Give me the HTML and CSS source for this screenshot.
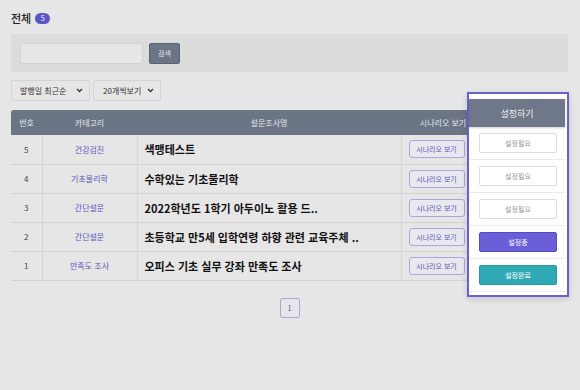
FILE: index.html
```html
<!DOCTYPE html>
<html lang="ko">
<head>
    <meta charset="UTF-8">
    <meta name="viewport" content="width=device-width, initial-scale=1.0">
    <title>설문조사 목록</title>
    <link rel="stylesheet" href="styles.css">
</head>
<body>
    <div class="page-head">
        <h2>전체</h2>
        <span class="count-badge">5</span>
    </div>

    <div class="search-box">
        <div class="search-input"></div>
        <button class="search-btn">검색</button>
    </div>

    <div class="filters">
        <div class="select sort">
            <span>발행일 최근순</span>
            <svg width="7" height="5" viewBox="0 0 7 5"><path d="M1 1l2.5 2.5L6 1" fill="none" stroke="#333" stroke-width="1.3"/></svg>
        </div>
        <div class="select per-page">
            <span>20개씩보기</span>
            <svg width="7" height="5" viewBox="0 0 7 5"><path d="M1 1l2.5 2.5L6 1" fill="none" stroke="#333" stroke-width="1.3"/></svg>
        </div>
    </div>

    <table class="survey-table">
        <colgroup>
            <col class="col-no">
            <col class="col-cat">
            <col class="col-title">
            <col class="col-scenario">
            <col class="col-setting">
        </colgroup>
        <thead>
            <tr>
                <th>번호</th>
                <th>카테고리</th>
                <th>설문조사명</th>
                <th>시나리오 보기</th>
                <th></th>
            </tr>
        </thead>
        <tbody>
            <tr>
                <td class="no">5</td>
                <td class="cat">건강검진</td>
                <td class="title">색맹테스트</td>
                <td class="scenario"><button class="scenario-btn">시나리오 보기</button></td>
                <td></td>
            </tr>
            <tr>
                <td class="no">4</td>
                <td class="cat">기초물리학</td>
                <td class="title">수학있는 기초물리학</td>
                <td class="scenario"><button class="scenario-btn">시나리오 보기</button></td>
                <td></td>
            </tr>
            <tr>
                <td class="no">3</td>
                <td class="cat">간단설문</td>
                <td class="title">2022학년도 1학기 아두이노 활용 드..</td>
                <td class="scenario"><button class="scenario-btn">시나리오 보기</button></td>
                <td></td>
            </tr>
            <tr>
                <td class="no">2</td>
                <td class="cat">간단설문</td>
                <td class="title">초등학교 만5세 입학연령 하향 관련 교육주체 ..</td>
                <td class="scenario"><button class="scenario-btn">시나리오 보기</button></td>
                <td></td>
            </tr>
            <tr>
                <td class="no">1</td>
                <td class="cat">만족도 조사</td>
                <td class="title">오피스 기초 실무 강좌 만족도 조사</td>
                <td class="scenario"><button class="scenario-btn">시나리오 보기</button></td>
                <td></td>
            </tr>
        </tbody>
    </table>

    <div class="pagination">
        <span class="page current">1</span>
    </div>

    <!-- highlighted settings column -->
    <div class="setting-panel">
        <div class="setting-head">설정하기</div>
        <div class="setting-row"><button class="state-btn need">설정필요</button></div>
        <div class="setting-row"><button class="state-btn need">설정필요</button></div>
        <div class="setting-row"><button class="state-btn need">설정필요</button></div>
        <div class="setting-row"><button class="state-btn doing">설정중</button></div>
        <div class="setting-row"><button class="state-btn done">설정완료</button></div>
    </div>
</body>
</html>
```

FILE: styles.css
```css
* {
    margin: 0;
    padding: 0;
    box-sizing: border-box;
}

body {
    font-family: 'Noto Sans CJK KR', 'Noto Sans', sans-serif;
    background: #e6e6e6;
    color: #333;
    width: 580px;
    height: 390px;
    padding: 10px 12px 0 11px;
    overflow: hidden;
}

.page-head {
    display: flex;
    align-items: center;
    gap: 4px;
    height: 16px;
}

.page-head h2 {
    font-size: 11px;
    font-weight: 500;
    color: #222;
}

.count-badge {
    display: inline-flex;
    align-items: center;
    justify-content: center;
    width: 15px;
    height: 11px;
    border-radius: 6px;
    background: #5b55c6;
    color: #fff;
    font-size: 7px;
}

.search-box {
    margin-top: 8px;
    height: 38px;
    background: #dcdcdc;
    border-radius: 2px;
    display: flex;
    align-items: center;
    gap: 6px;
    padding: 0 9px;
}

.search-input {
    width: 123px;
    height: 21px;
    background: #e6e6e6;
    border: 1px solid #d2d2d2;
    border-radius: 2px;
}

.search-btn {
    width: 31px;
    height: 21px;
    background: #6b7585;
    border: 1px solid #5a6373;
    border-radius: 2px;
    color: #e8e8ee;
    font-family: inherit;
    font-size: 7px;
}

.filters {
    margin-top: 8px;
    display: flex;
    gap: 3px;
}

.select {
    height: 21px;
    display: flex;
    align-items: center;
    justify-content: space-between;
    padding: 0 6px 0 8px;
    background: #e6e6e6;
    border: 1px solid #d4d4d4;
    border-radius: 2px;
    font-size: 8px;
    color: #333;
}

.select.sort {
    width: 79px;
}

.select.per-page {
    width: 68px;
    padding-left: 9px;
}

.survey-table {
    margin-top: 9px;
    width: 557px;
    border-collapse: collapse;
    table-layout: fixed;
}

.col-no { width: 31px; }
.col-cat { width: 95px; }
.col-title { width: 264px; }
.col-scenario { width: 84px; }
.col-setting { width: 83px; }

.survey-table thead tr {
    height: 25px;
    background: #6b7585;
}

.survey-table th {
    color: #e6e8ee;
    font-size: 8px;
    font-weight: 400;
    text-align: center;
}

.survey-table th:first-child {
    border-top-left-radius: 3px;
}

.survey-table tbody tr {
    height: 29px;
    border-bottom: 1px solid #d3d3d3;
}

.survey-table td {
    font-size: 8px;
    text-align: center;
    border-right: 1px solid #d6d6d6;
}

.survey-table td:last-child {
    border-right: none;
}

.survey-table td.no {
    color: #444;
}

.survey-table td.cat {
    color: #5a55b8;
}

.survey-table td.title {
    text-align: left;
    padding-left: 7px;
    font-size: 11px;
    font-weight: 700;
    color: #111;
    white-space: nowrap;
    overflow: hidden;
}

.survey-table td.scenario {
    text-align: left;
    padding-left: 7px;
}

.scenario-btn {
    width: 56px;
    height: 18px;
    background: #e8e8ee;
    border: 1px solid #aaa6dc;
    border-radius: 3px;
    color: #5a55b8;
    font-family: inherit;
    font-size: 7px;
}

.pagination {
    margin-top: 17px;
    display: flex;
    justify-content: center;
}

.page {
    width: 20px;
    height: 20px;
    display: flex;
    align-items: center;
    justify-content: center;
    border: 1px solid #aaa6dc;
    border-radius: 2px;
    color: #5a55b8;
    font-size: 7px;
}

.setting-panel {
    position: absolute;
    left: 467px;
    top: 92px;
    width: 102px;
    height: 205px;
    background: #fff;
    border: 2px solid #6a60d2;
    padding: 5px 2px 0 0;
    box-shadow: 0 2px 6px rgba(0, 0, 0, 0.15);
}

.setting-head {
    height: 28px;
    background: #6f7888;
    color: #eef0f4;
    font-size: 9px;
    display: flex;
    align-items: center;
    justify-content: center;
    box-shadow: 0 1px 2px rgba(0, 0, 0, 0.2);
}

.setting-row {
    height: 33px;
    display: flex;
    align-items: flex-start;
    padding: 6px 8px 0 10px;
    border-bottom: 1px solid #ececec;
}

.state-btn {
    width: 78px;
    height: 20px;
    border-radius: 2px;
    font-family: inherit;
    font-size: 7px;
}

.state-btn.need {
    background: #fff;
    border: 1px solid #dcdcdc;
    color: #999;
}

.state-btn.doing {
    background: #6a5fd6;
    border: 1px solid #564bc4;
    color: #fff;
}

.state-btn.done {
    background: #2fa9b4;
    border: 1px solid #2898a2;
    color: #fff;
}
```
